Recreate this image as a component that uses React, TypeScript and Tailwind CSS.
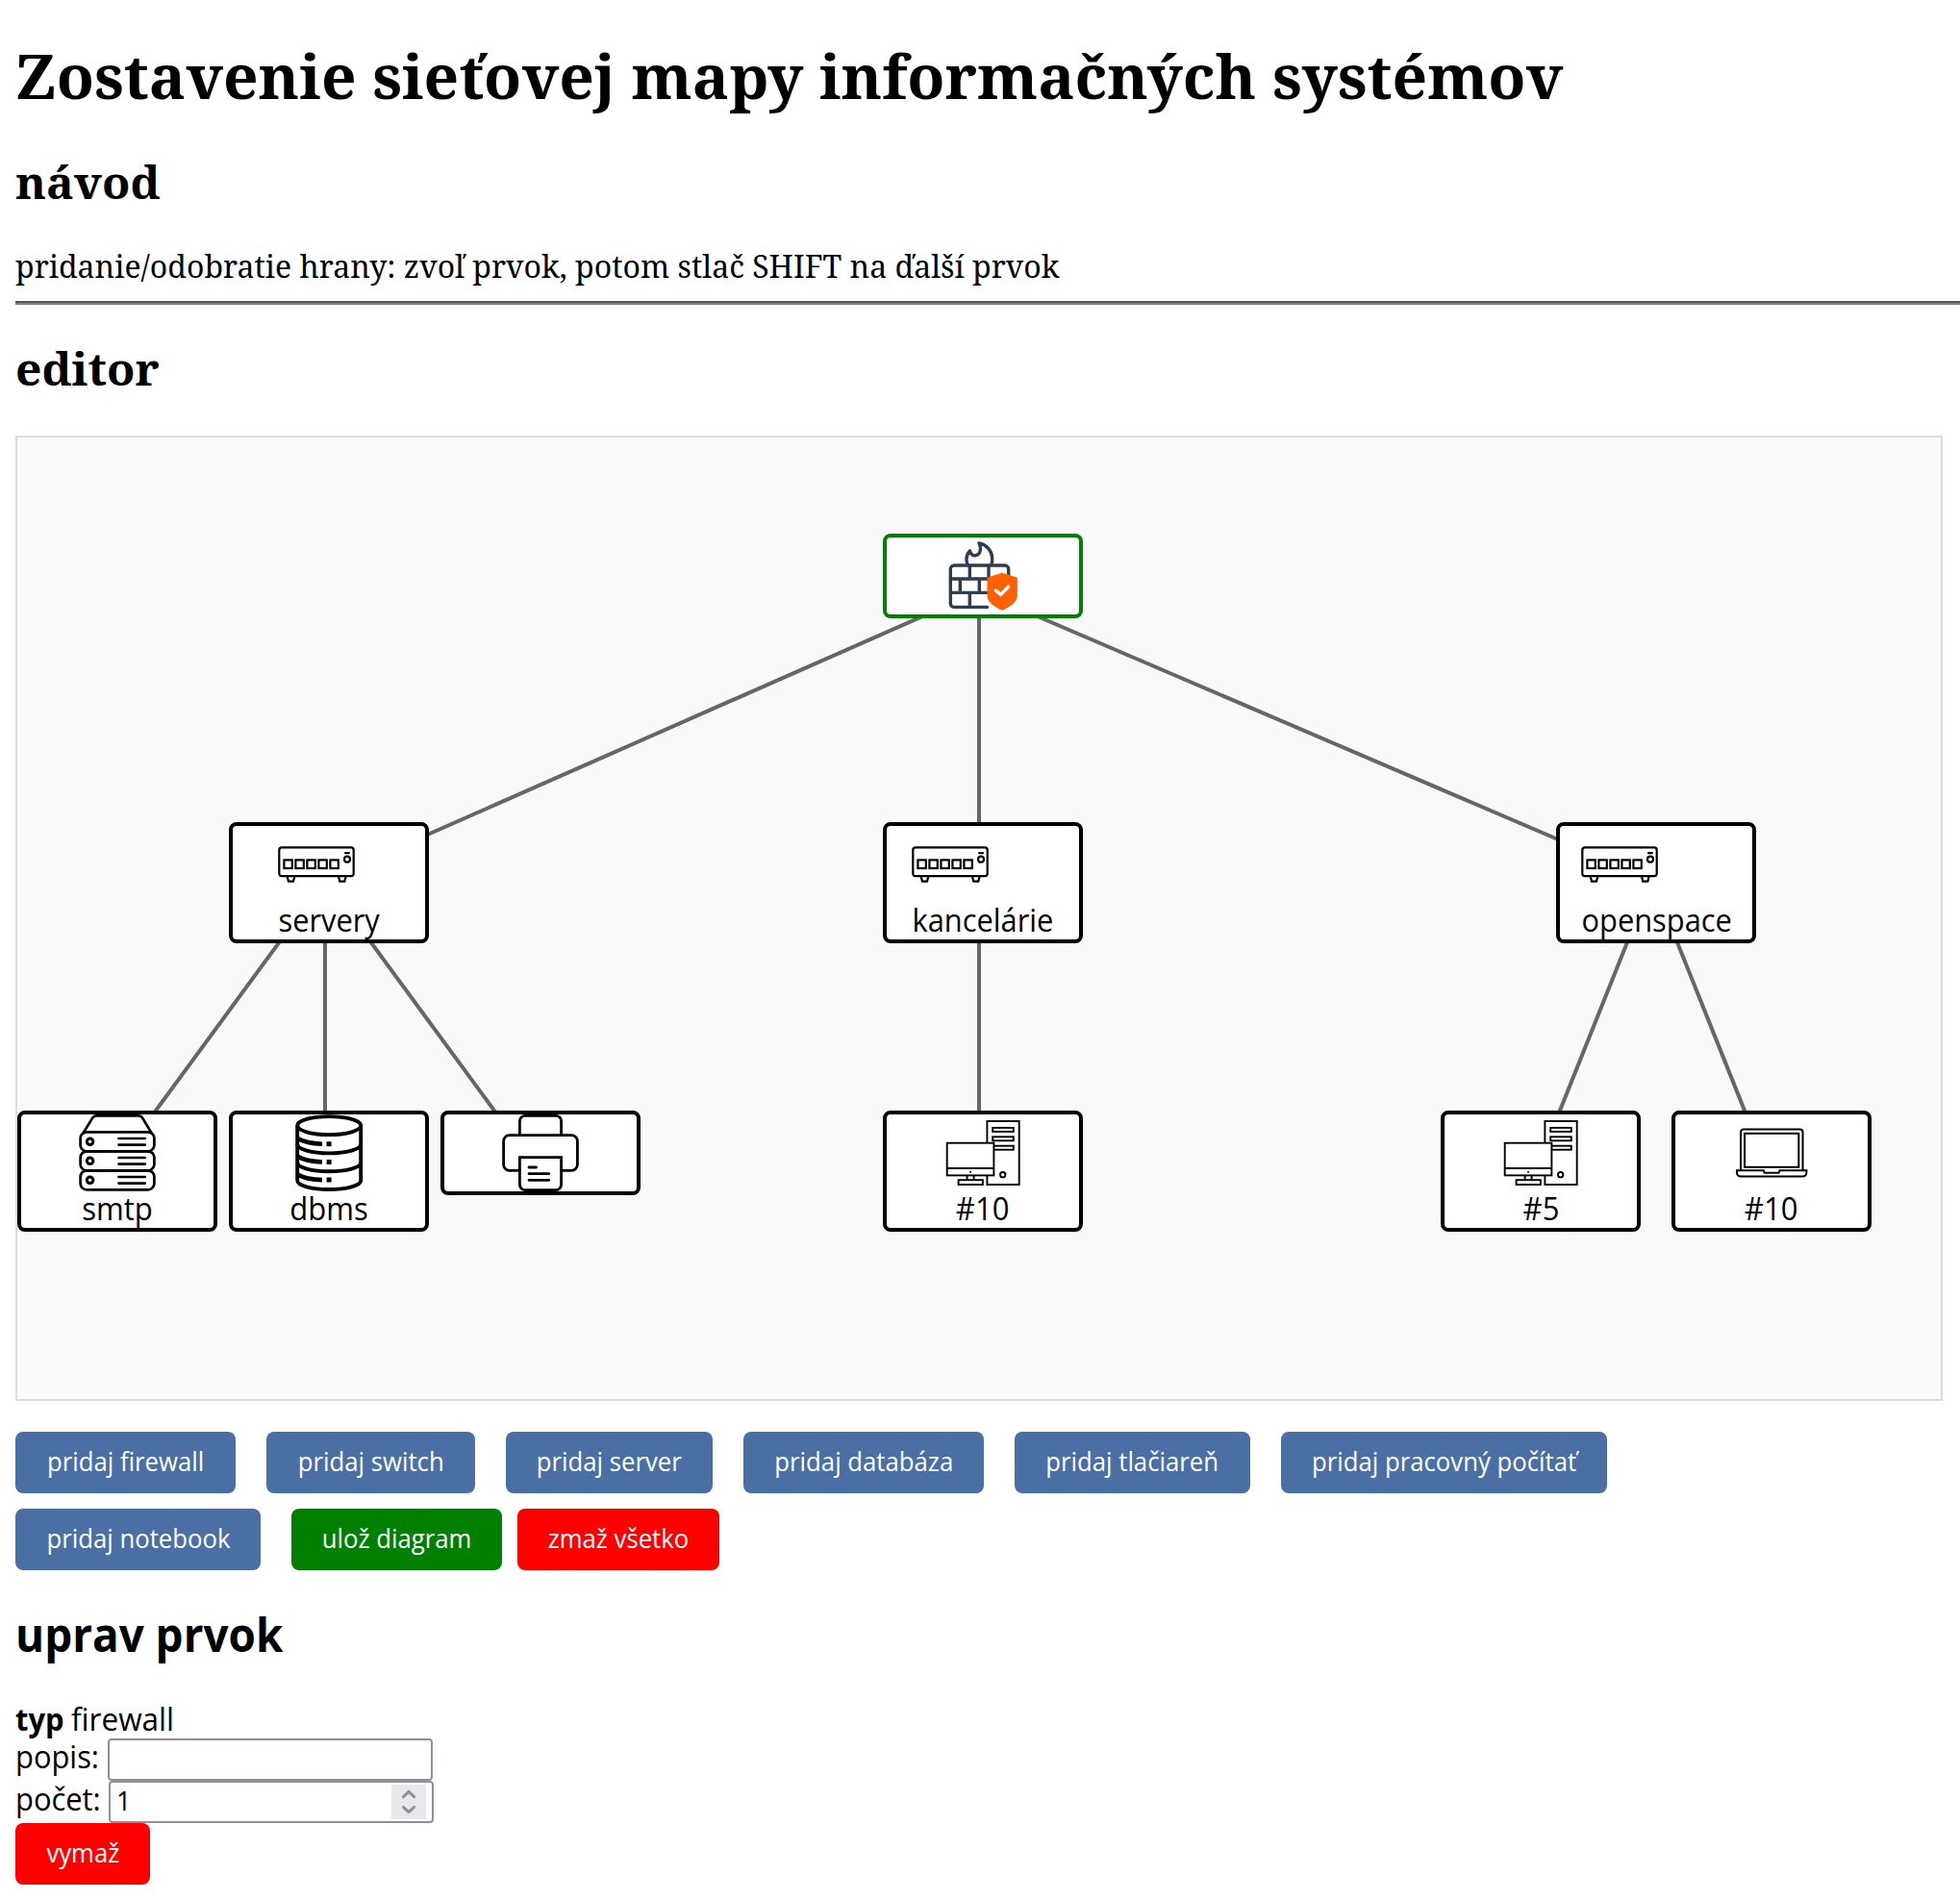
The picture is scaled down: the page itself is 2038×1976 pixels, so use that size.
import type { ReactNode } from 'react';

type IconName = 'firewall' | 'switch' | 'server' | 'database' | 'printer' | 'computer' | 'notebook';

const INK = '#000';

const drawings: Record<IconName, ReactNode> = {
  firewall: (
    <>
      <g stroke="#2d3e50" strokeWidth="3.4" strokeLinecap="round" strokeLinejoin="round">
        <path d="M44.5 72.4H10.3a4 4 0 0 1-4-4V33a4 4 0 0 1 4-4H62.7a4 4 0 0 1 4 4V42" />
        <path d="M6.3 43H46M6.3 57.4H46M26.3 29V43M46 29V43M16.3 43V57.4M36.3 43V57.4M26.3 57.4V72.4" strokeLinecap="butt" />
        <path d="M23.9 28C22.1 22.5 23 17.5 26.5 13.9C27.6 17.6 30 19 32.3 18.7C37.6 17.8 38.6 11.5 36.1 5.8C43.6 7.3 49.2 13.6 49.7 21C49.8 23.5 49.6 26 49 28" />
      </g>
      <path
        d="M60 37.4L75.2 42V60.5C75.2 67 68 71.2 60 75.2C52 71.2 45.1 67 45.1 60.5V42Z"
        fill="#ff6000"
        stroke="#ff6000"
        strokeWidth="1.2"
        strokeLinejoin="round"
      />
      <path d="M53.4 55.2L58.6 59.4L66.5 51.2" stroke="#fff" strokeWidth="3.5" strokeLinecap="round" strokeLinejoin="round" />
    </>
  ),
  switch: (
    <g stroke={INK} strokeWidth="2.2">
      <rect x="1.3" y="22.4" width="77.4" height="29.7" rx="2.6" />
      {[0, 1, 2, 3, 4].map((i) => (
        <rect key={i} x={6.4 + i * 12} y="35.4" width="8.4" height="8.6" />
      ))}
      <path d="M69.2 28.1H74.8M9.6 52.2L11 57.6H16L17.4 52.2M62.9 52.2L64.3 57.6H69.3L70.7 52.2" />
      <circle cx="72" cy="34.7" r="3" />
    </g>
  ),
  server: (
    <g stroke={INK} strokeWidth="2.7" strokeLinecap="round">
      <path d="M4.8 19L14.2 3.6Q15.6 1.4 18 1.4H62.3Q64.8 1.4 66.1 3.6L75.4 19" />
      {[18.3, 38.3, 58.3].map((y) => (
        <g key={y}>
          <rect x="1.6" y={y} width="76.8" height="20" rx="6.5" />
          <circle cx="11.6" cy={y + 10} r="3.3" strokeWidth="3" />
          <path d={`M41.5 ${y + 6.7}H68.8M41.5 ${y + 13.3}H68.8`} />
        </g>
      ))}
    </g>
  ),
  database: (
    <g stroke={INK} strokeWidth="3.9">
      <ellipse cx="40.2" cy="11.6" rx="33" ry="9.5" />
      <path d="M7.2 11.6V68.8C7.2 74 22 78 40.2 78S73.2 74 73.2 68.8V11.6" />
      <path d="M7.2 31C7.2 36.2 22 40.4 40.2 40.4S73.2 36.2 73.2 31M7.2 50C7.2 55.2 22 59.3 40.2 59.3S73.2 55.2 73.2 50" />
      <path d="M7.5 25C13 28.2 22 30.3 33 30.7M7.5 43.8C13 47 22 49.1 33 49.5M7.5 62.4C13 65.6 22 67.7 33 68.1" strokeWidth="4.6" />
      <path d="M37.6 30.7H42.6M37.6 49.4H42.6M37.6 68.1H42.6" strokeWidth="5" />
    </g>
  ),
  printer: (
    <g stroke={INK} strokeWidth="2.8" strokeLinecap="round">
      <path d="M18.4 21.5V7a5.6 5.6 0 0 1 5.6-5.6H56A5.6 5.6 0 0 1 61.6 7V21.5" />
      <path d="M18.4 58.3H7.6a6 6 0 0 1-6-6V27.7a6 6 0 0 1 6-6H72.4a6 6 0 0 1 6 6V52.3a6 6 0 0 1-6 6H61.6" />
      <path d="M18.4 44.7H61.6V73A5.6 5.6 0 0 1 56 78.6H24A5.6 5.6 0 0 1 18.4 73Z" />
      <path d="M28 55H35.6M28 61.7H48.8M28 68.3H48.8" />
    </g>
  ),
  computer: (
    <g stroke={INK} strokeWidth="1.9">
      <rect x="44.4" y="7" width="33.3" height="66" />
      <rect x="50.2" y="13.9" width="21.6" height="4" />
      <rect x="50.2" y="23.3" width="21.6" height="4" />
      <rect x="50.2" y="32.7" width="21.6" height="4" />
      <circle cx="60.7" cy="62.7" r="2.7" />
      <rect x="2.7" y="29.7" width="48.7" height="33.7" fill="#fff" />
      <path d="M2.7 56H51.4M23.6 63.4V68.2M30.6 63.4V68.2" />
      <rect x="14.6" y="68.2" width="25.3" height="4.8" />
      <circle cx="27" cy="59.7" r="1" fill={INK} stroke="none" />
    </g>
  ),
  notebook: (
    <g stroke={INK} strokeWidth="2">
      <path d="M8 58.3V18.4a3 3 0 0 1 3-3H69.5a3 3 0 0 1 3 3V58.3" />
      <rect x="12.1" y="19.8" width="56.2" height="35" />
      <path d="M4 58.3H31.8L32.6 60.7H47.6L48.4 58.3H76.4V60.6a4 4 0 0 1-4 4H8a4 4 0 0 1-4-4Z" />
    </g>
  ),
};

function Icon({ name }: { name: IconName }) {
  return (
    <svg viewBox="0 0 80 80" className="block size-20 shrink-0" fill="none">
      {drawings[name]}
    </svg>
  );
}

type DiagramNode = { id: string; x: number; y: number; icon: IconName; label?: string; labelBox?: string; selected?: boolean };

const nodes: DiagramNode[] = [
  { id: 'fw', x: 900, y: 100, icon: 'firewall', selected: true },
  { id: 'sw1', x: 220, y: 400, icon: 'switch', label: 'servery', labelBox: 'w-[106px] items-start' },
  { id: 'sw2', x: 900, y: 400, icon: 'switch', label: 'kancelárie', labelBox: 'w-[148px] items-start' },
  { id: 'sw3', x: 1600, y: 400, icon: 'switch', label: 'openspace', labelBox: 'w-[156px] items-start' },
  { id: 'srv', x: 0, y: 700, icon: 'server', label: 'smtp' },
  { id: 'db', x: 220, y: 700, icon: 'database', label: 'dbms' },
  { id: 'prn', x: 440, y: 700, icon: 'printer' },
  { id: 'pc1', x: 900, y: 700, icon: 'computer', label: '#10' },
  { id: 'pc2', x: 1480, y: 700, icon: 'computer', label: '#5' },
  { id: 'nb', x: 1720, y: 700, icon: 'notebook', label: '#10' },
];

const edges: [string, string][] = [
  ['fw', 'sw1'],
  ['fw', 'sw2'],
  ['fw', 'sw3'],
  ['sw1', 'srv'],
  ['sw1', 'db'],
  ['sw1', 'prn'],
  ['sw2', 'pc1'],
  ['sw3', 'pc2'],
  ['sw3', 'nb'],
];

const byId = (id: string) => nodes.find((n) => n.id === id)!;

function Diagram() {
  return (
    <div className="relative mt-[38px] h-[1004px] w-[2004px] border-2 border-[#ddd] bg-[#f9f9f9]">
      <svg className="absolute inset-0 h-full w-full" stroke="#666" strokeWidth="4">
        {edges.map(([a, b]) => (
          <line key={a + b} x1={byId(a).x + 100} y1={byId(a).y + 60} x2={byId(b).x + 100} y2={byId(b).y + 60} />
        ))}
      </svg>
      {nodes.map((n) => (
        <div
          key={n.id}
          style={{ left: n.x, top: n.y }}
          className={`absolute flex w-[208px] flex-col items-center rounded-lg border-4 bg-white ${n.selected ? 'border-[#008000]' : 'border-black'} ${n.label ? 'h-[126px]' : 'h-[88px]'}`}
        >
          <div className={`flex flex-col ${n.labelBox ?? 'items-center'}`}>
            <Icon name={n.icon} />
            {n.label && (
              <span className={`leading-[35px] whitespace-nowrap ${n.labelBox ? 'origin-left translate-x-[0.5px] scale-x-[0.963]' : 'scale-x-[0.97]'}`}>{n.label}</span>
            )}
          </div>
        </div>
      ))}
    </div>
  );
}

function Button({ children, className }: { children: ReactNode; className: string }) {
  return (
    <button className={`flex h-16 shrink-0 justify-center rounded-lg text-[26.67px] leading-[62px] whitespace-nowrap text-white ${className}`}>
      <span className="scale-x-[0.965]">{children}</span>
    </button>
  );
}

export default function App() {
  return (
    <div className="h-[1976px] overflow-hidden bg-white pl-4 font-['Open_Sans','Noto_Sans',sans-serif] text-[32px] text-black">
      <div className="flex flex-col font-['Noto_Serif',serif]">
        <h1 className="mt-[35px] text-[64px] leading-[87px] font-bold tracking-[0.02px]">Zostavenie sieťovej mapy informačných systémov</h1>
        <h2 className="mt-[34px] text-[48px] leading-[65px] font-bold">návod</h2>
        <p className="mt-[34px] leading-[44px]">pridanie/odobratie hrany: zvoľ prvok, potom stlač SHIFT na ďalší prvok</p>
        <hr className="mt-[14px] h-1 border-t-2 border-b-2 border-t-[#555] border-b-[#808080]" />
        <h2 className="mt-[33px] text-[48px] leading-[65px] font-bold">editor</h2>
      </div>

      <Diagram />

      <div className="mt-8 flex gap-8">
        <Button className="w-[229px] bg-[#4a6fa5]">pridaj firewall</Button>
        <Button className="w-[217px] bg-[#4a6fa5]">pridaj switch</Button>
        <Button className="w-[215px] bg-[#4a6fa5]">pridaj server</Button>
        <Button className="w-[250px] bg-[#4a6fa5]">pridaj databáza</Button>
        <Button className="w-[245px] bg-[#4a6fa5]">pridaj tlačiareň</Button>
        <Button className="w-[339px] bg-[#4a6fa5]">pridaj pracovný počítať</Button>
      </div>
      <div className="mt-4 flex gap-4">
        <Button className="mr-4 w-[255px] bg-[#4a6fa5]">pridaj notebook</Button>
        <Button className="w-[219px] bg-[#008000]">ulož diagram</Button>
        <Button className="w-[210px] bg-[#f00]">zmaž všetko</Button>
      </div>

      <h2 className="mt-[39px] origin-left scale-x-[0.955] text-[48px] leading-[56px] font-bold">
        uprav prvok
      </h2>
      <div className="mt-[41px] flex h-[39px] gap-2 leading-[38px]">
        <b className="w-[50px] origin-left scale-x-[0.965]">typ</b>
        <span className="origin-left scale-x-[0.985]">firewall</span>
      </div>
      <label className="flex h-11 leading-[37px]">
        <span className="w-24 origin-left scale-x-[0.965]">popis:</span>
        <input className="h-11 w-[338px] rounded-[4px] border-2 border-[#8f8f9d] bg-white px-2 text-[26.67px] outline-none" />
      </label>
      <label className="flex h-11 leading-[37px]">
        <span className="w-[97px] origin-left scale-x-[0.965]">počet:</span>
        <span className="flex h-11 w-[338px] items-center justify-between rounded-[4px] border-2 border-[#8f8f9d] bg-white pr-[6px] pl-[6px] text-[26.67px]">
          <span className="pb-[2px] leading-[36px]">1</span>
          <span className="flex h-9 w-9 items-center justify-center bg-[#e9e9ed]">
            <svg viewBox="0 0 36 36" className="size-9" fill="none" stroke="#8f8f9d" strokeWidth="3" strokeLinecap="round" strokeLinejoin="round">
              <path d="M12.4 12.6L18 7.3L23.6 12.6M12.4 23.4L18 28.7L23.6 23.4" />
            </svg>
          </span>
        </span>
      </label>
      <Button className="w-[140px] bg-[#f00]">vymaž</Button>
    </div>
  );
}
